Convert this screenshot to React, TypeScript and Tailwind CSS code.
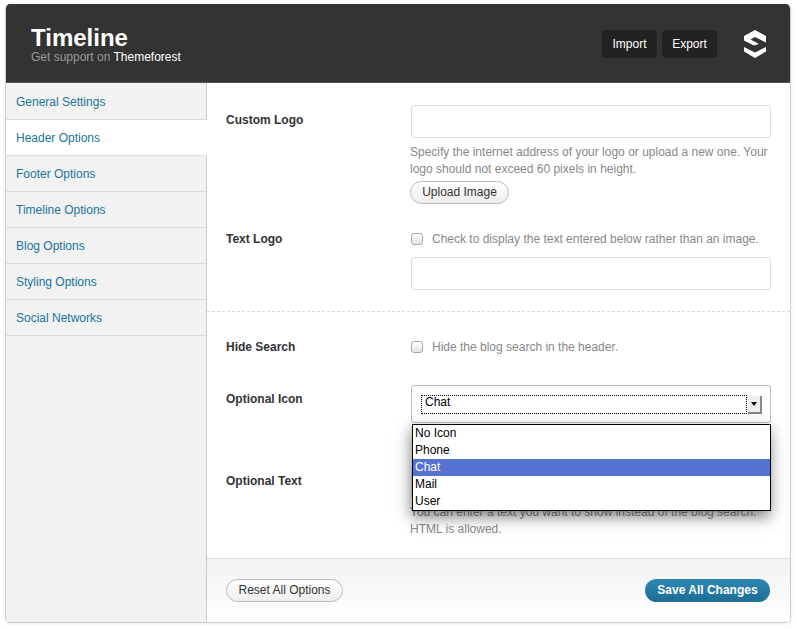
const NAV = [
  "General Settings",
  "Header Options",
  "Footer Options",
  "Timeline Options",
  "Blog Options",
  "Styling Options",
  "Social Networks",
];

const ICON_OPTIONS = ["No Icon", "Phone", "Chat", "Mail", "User"];

function Label({ children }: { children: string }) {
  return <div className="w-[184px] shrink-0 text-[12px] leading-[16px] font-bold text-[#333]">{children}</div>;
}

function Check() {
  return (
    <span className="mt-[2px] h-[12px] w-[12px] shrink-0 rounded-[3px] border border-[#a9a9a9] bg-gradient-to-b from-[#fff] to-[#e4e4e4]" />
  );
}

function PillButton({ children, className }: { children: string; className: string }) {
  return (
    <button
      className={`h-[23px] rounded-full border border-[#bbb] bg-gradient-to-b from-[#fff] to-[#eee] pb-[1px] text-[12px] leading-[18px] text-[#333] ${className}`}
    >
      {children}
    </button>
  );
}

export default function App() {
  return (
    <div className="h-[629px] w-[797px] bg-white pt-[4px] pl-[5px] font-['Liberation_Sans',Arial,sans-serif]">
      <div className="flex h-[619px] w-[786px] flex-col overflow-hidden rounded-[5px] border border-t-0 border-[#ccc] shadow-[0_1px_4px_rgba(0,0,0,0.08)]">
        <header className="-mx-px flex h-[79px] shrink-0 items-start justify-between bg-[#333] pl-[26px] shadow-[inset_0_-1px_1px_#555]">
          <div className="pt-[21px]">
            <h1 className="text-[24px] leading-[25px] font-bold text-white">Timeline</h1>
            <p className="text-[12px] leading-[14px] text-[#999]">
              Get support on <span className="text-white">Themeforest</span>
            </p>
          </div>
          <div className="flex items-center pt-[26px] pr-[25px]">
            <button className="h-[28px] w-[55px] rounded-[4px] bg-[#222] text-[12px] text-white">Import</button>
            <button className="ml-[5px] h-[28px] w-[55px] rounded-[4px] bg-[#222] text-[12px] text-white">Export</button>
            <svg className="ml-[27px]" width="22" height="28" viewBox="0 0 22 28" fill="#fff">
              <path d="M11 0 22 6V12.5L11 7 6.5 9.5 15 14 10 15.5 0 10.5V6Z" />
              <path d="M0 17 11 22.5 22 17V21.5L11 28 0 21.5Z" />
            </svg>
          </div>
        </header>

        <div className="flex min-h-0 flex-1">
          <nav className="w-[201px] shrink-0 border-r border-[#ccc] bg-[#f2f2f2] pt-[1px]">
            {NAV.map((item) => (
              <div
                key={item}
                className={`h-[36px] border-b border-[#ddd] pl-[10px] text-[12px] leading-[36px] text-[#21759b] ${
                  item === "Header Options" ? "-mr-px bg-white" : ""
                }`}
              >
                {item}
              </div>
            ))}
          </nav>

          <main className="relative flex min-w-0 flex-1 flex-col bg-white">
            <div className="flex-1">
              <div className="h-[229px] border-b border-dashed border-[#ddd] pt-[22px] pl-[19px]">
                <div className="flex">
                  <div className="pt-[7px]">
                    <Label>Custom Logo</Label>
                  </div>
                  <div>
                    <div className="ml-[1px] h-[33px] w-[360px] rounded-[3px] border border-[#ddd]" />
                    <p className="mt-[6px] w-[365px] text-[12px] leading-[17px] text-[#888]">
                      Specify the internet address of your logo or upload a new one. Your logo should not exceed 60 pixels in height.
                    </p>
                    <PillButton className="mt-[3px] w-[99px]">Upload Image</PillButton>
                  </div>
                </div>
                <div className="mt-[27px] flex">
                  <Label>Text Logo</Label>
                  <div>
                    <div className="flex items-start pl-[1px]">
                      <Check />
                      <span className="ml-[9px] text-[12px] leading-[16px] text-[#888]">
                        Check to display the text entered below rather than an image.
                      </span>
                    </div>
                    <div className="mt-[10px] ml-[1px] h-[33px] w-[360px] rounded-[3px] border border-[#ddd]" />
                  </div>
                </div>
              </div>

              <div className="pt-[27px] pl-[19px]">
                <div className="flex">
                  <Label>Hide Search</Label>
                  <div className="flex items-start pl-[1px]">
                    <Check />
                    <span className="ml-[9px] text-[12px] leading-[16px] text-[#888]">
                      Hide the blog search in the header.
                    </span>
                  </div>
                </div>

                <div className="mt-[30px] flex">
                  <div className="pt-[6px]">
                    <Label>Optional Icon</Label>
                  </div>
                  <div className="relative ml-[1px] flex h-[38px] w-[360px] items-start rounded-[3px] border border-[#bbb] pt-[9px] pl-[9px]">
                    <div className="h-[19px] w-[326px] border border-dotted border-black pl-[3px] text-[12px] leading-[12px] text-black">
                      Chat
                    </div>
                    <div className="mt-[1px] ml-[1px] flex h-[18px] w-[14px] items-center justify-center border-r-2 border-b-2 border-[#888] bg-[#f0f0f0]">
                      <span className="h-0 w-0 border-x-[3px] border-t-[4px] border-x-transparent border-t-black" />
                    </div>
                    <div className="absolute top-[38px] left-0 z-10 w-[359px] border border-black bg-white text-[12px] leading-[17px] text-black shadow-[-1px_6px_14px_rgba(0,0,0,0.5)]">
                      {ICON_OPTIONS.map((opt) => (
                        <div key={opt} className={`pl-[2px] ${opt === "Chat" ? "bg-[#5572d3] text-white" : ""}`}>
                          {opt}
                        </div>
                      ))}
                    </div>
                  </div>
                </div>

                <div className="mt-[43px] flex">
                  <div className="pt-[7px]">
                    <Label>Optional Text</Label>
                  </div>
                  <div>
                    <div className="ml-[1px] h-[33px] w-[360px] rounded-[3px] border border-[#ddd]" />
                    <p className="mt-[5px] w-[365px] text-[12px] leading-[17px] text-[#888]">
                      You can enter a text you want to show instead of the blog search. HTML is allowed.
                    </p>
                  </div>
                </div>
              </div>
            </div>

            <footer className="flex h-[64px] shrink-0 items-start justify-between border-t border-[#ddd] bg-gradient-to-b from-[#f2f2f2] to-white pt-[20px] pr-[20px] pl-[19px]">
              <PillButton className="w-[117px]">Reset All Options</PillButton>
              <button className="h-[23px] w-[125px] rounded-full bg-gradient-to-b from-[#2a88b4] to-[#1f6d94] pb-[1px] text-[12px] font-bold text-white">
                Save All Changes
              </button>
            </footer>
          </main>
        </div>
      </div>
    </div>
  );
}
